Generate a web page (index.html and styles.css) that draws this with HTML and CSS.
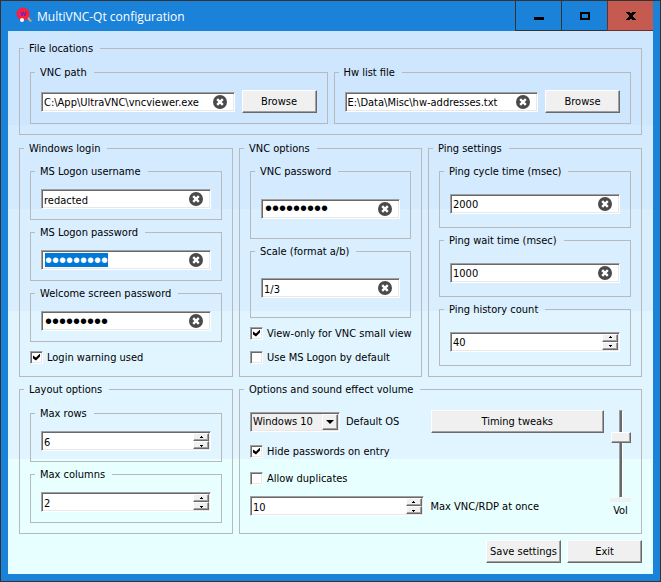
FILE: index.html
```html
<!DOCTYPE html>
<html lang="en">
    <head>
        <title>MultiVNC-Qt configuration</title>
        <meta charset="UTF-8">
        <meta name="viewport" content="width=device-width, initial-scale=1.0">
        <link rel="stylesheet" href="styles.css">
    </head>
    <body>
        <svg class="defs" aria-hidden="true">
            <symbol id="clear" viewBox="0 0 14 14">
                <circle cx="7" cy="7" r="7" fill="#4a4a4a"/>
                <path d="M4.2 4.2l5.6 5.6M9.8 4.2L4.2 9.8" stroke="#fff" stroke-width="2.4"/>
            </symbol>
            <symbol id="up" viewBox="0 0 5 3"><path d="M2 0h1v1h1v1H1V1h1z"/></symbol>
            <symbol id="down" viewBox="0 0 5 3"><path d="M1 1h3v1H3v1H2V2H1z"/></symbol>
        </svg>

        <div class="window">
            <header class="titlebar">
                <svg class="app-icon" viewBox="0 0 16 16">
                    <path d="M10 9l2-1 4 5-2 1z" fill="#c9a27c"/>
                    <circle cx="7" cy="6" r="6.5" fill="#fb1f3b"/>
                    <text x="7" y="8" text-anchor="middle" font-size="6" font-weight="bold" fill="#6a1fd0">W</text>
                    <circle cx="6" cy="12" r="2" fill="#fff"/>
                </svg>
                <h1>MultiVNC-Qt configuration</h1>
                <div class="window-buttons">
                    <button type="button" aria-label="Minimize"><svg viewBox="0 0 12 10"><path d="M1 6h10v3H1z"/></svg></button>
                    <button type="button" aria-label="Maximize"><svg viewBox="0 0 12 10"><path fill-rule="evenodd" d="M1 1h10v8H1zM3 3v4h6V3z"/></svg></button>
                    <button type="button" class="close" aria-label="Close"><svg viewBox="0 0 12 10"><path d="M1 1h4v1h2V1h4v1h-1v1H9v1H8v2h1v1h1v1h1v1H7V8H5v1H1V8h1V7h1V6h1V4H3V3H2V2H1z"/></svg></button>
                </div>
            </header>

            <form class="content">
                <fieldset class="panel files">
                    <legend>File locations</legend>
                    <fieldset class="group">
                        <legend><label for="vncPath">VNC path</label></legend>
                        <div class="field">
                            <input type="text" id="vncPath" value="C:\App\UltraVNC\vncviewer.exe">
                            <button type="button" class="clear" aria-label="Clear"><svg><use href="#clear"/></svg></button>
                        </div>
                        <button type="button" class="button">Browse</button>
                    </fieldset>
                    <fieldset class="group">
                        <legend><label for="hwFile">Hw list file</label></legend>
                        <div class="field">
                            <input type="text" id="hwFile" value="E:\Data\Misc\hw-addresses.txt">
                            <button type="button" class="clear" aria-label="Clear"><svg><use href="#clear"/></svg></button>
                        </div>
                        <button type="button" class="button">Browse</button>
                    </fieldset>
                </fieldset>

                <div class="panels">
                    <fieldset class="panel">
                        <legend>Windows login</legend>
                        <fieldset class="group">
                            <legend><label for="username">MS Logon username</label></legend>
                            <div class="field">
                                <input type="text" id="username" value="redacted">
                                <button type="button" class="clear" aria-label="Clear"><svg><use href="#clear"/></svg></button>
                            </div>
                        </fieldset>
                        <fieldset class="group">
                            <legend><label for="logonPassword">MS Logon password</label></legend>
                            <div class="field">
                                <input type="password" id="logonPassword" value="redacted1">
                                <button type="button" class="clear" aria-label="Clear"><svg><use href="#clear"/></svg></button>
                            </div>
                        </fieldset>
                        <fieldset class="group">
                            <legend><label for="welcomePassword">Welcome screen password</label></legend>
                            <div class="field">
                                <input type="password" id="welcomePassword" value="redacted1">
                                <button type="button" class="clear" aria-label="Clear"><svg><use href="#clear"/></svg></button>
                            </div>
                        </fieldset>
                        <label class="check"><input type="checkbox" checked>Login warning used</label>
                    </fieldset>

                    <fieldset class="panel">
                        <legend>VNC options</legend>
                        <fieldset class="group">
                            <legend><label for="vncPassword">VNC password</label></legend>
                            <div class="field">
                                <input type="password" id="vncPassword" value="redacted1">
                                <button type="button" class="clear" aria-label="Clear"><svg><use href="#clear"/></svg></button>
                            </div>
                        </fieldset>
                        <fieldset class="group">
                            <legend><label for="scale">Scale (format a/b)</label></legend>
                            <div class="field">
                                <input type="text" id="scale" value="1/3">
                                <button type="button" class="clear" aria-label="Clear"><svg><use href="#clear"/></svg></button>
                            </div>
                        </fieldset>
                        <label class="check"><input type="checkbox" checked>View-only for VNC small view</label>
                        <label class="check"><input type="checkbox">Use MS Logon by default</label>
                    </fieldset>

                    <fieldset class="panel">
                        <legend>Ping settings</legend>
                        <fieldset class="group">
                            <legend><label for="pingCycle">Ping cycle time (msec)</label></legend>
                            <div class="field">
                                <input type="text" id="pingCycle" value="2000">
                                <button type="button" class="clear" aria-label="Clear"><svg><use href="#clear"/></svg></button>
                            </div>
                        </fieldset>
                        <fieldset class="group">
                            <legend><label for="pingWait">Ping wait time (msec)</label></legend>
                            <div class="field">
                                <input type="text" id="pingWait" value="1000">
                                <button type="button" class="clear" aria-label="Clear"><svg><use href="#clear"/></svg></button>
                            </div>
                        </fieldset>
                        <fieldset class="group">
                            <legend><label for="pingHistory">Ping history count</label></legend>
                            <div class="field">
                                <input type="number" id="pingHistory" value="40">
                                <div class="spin">
                                    <button type="button" data-step="1" aria-label="Increase"><svg><use href="#up"/></svg></button>
                                    <button type="button" data-step="-1" aria-label="Decrease"><svg><use href="#down"/></svg></button>
                                </div>
                            </div>
                        </fieldset>
                    </fieldset>

                    <fieldset class="panel layout">
                        <legend>Layout options</legend>
                        <fieldset class="group">
                            <legend><label for="maxRows">Max rows</label></legend>
                            <div class="field">
                                <input type="number" id="maxRows" value="6">
                                <div class="spin">
                                    <button type="button" data-step="1" aria-label="Increase"><svg><use href="#up"/></svg></button>
                                    <button type="button" data-step="-1" aria-label="Decrease"><svg><use href="#down"/></svg></button>
                                </div>
                            </div>
                        </fieldset>
                        <fieldset class="group">
                            <legend><label for="maxColumns">Max columns</label></legend>
                            <div class="field">
                                <input type="number" id="maxColumns" value="2">
                                <div class="spin">
                                    <button type="button" data-step="1" aria-label="Increase"><svg><use href="#up"/></svg></button>
                                    <button type="button" data-step="-1" aria-label="Decrease"><svg><use href="#down"/></svg></button>
                                </div>
                            </div>
                        </fieldset>
                    </fieldset>

                    <fieldset class="panel options">
                        <legend>Options and sound effect volume</legend>
                        <div class="option-rows">
                            <div class="option-row">
                                <div class="option-cell">
                                    <div class="dropdown">
                                        <select id="defaultOs">
                                            <option>Windows 10</option>
                                            <option>Windows 7</option>
                                        </select>
                                        <span class="arrow"></span>
                                    </div>
                                    <label for="defaultOs">Default OS</label>
                                </div>
                                <button type="button" class="button">Timing tweaks</button>
                            </div>
                            <label class="check"><input type="checkbox" checked>Hide passwords on entry</label>
                            <label class="check"><input type="checkbox">Allow duplicates</label>
                            <div class="option-row">
                                <div class="field">
                                    <input type="number" id="maxAtOnce" value="10">
                                    <div class="spin">
                                        <button type="button" data-step="1" aria-label="Increase"><svg><use href="#up"/></svg></button>
                                        <button type="button" data-step="-1" aria-label="Decrease"><svg><use href="#down"/></svg></button>
                                    </div>
                                </div>
                                <label for="maxAtOnce">Max VNC/RDP at once</label>
                            </div>
                        </div>
                        <div class="volume">
                            <input type="range" id="volume" min="0" max="100" value="72">
                            <label for="volume">Vol</label>
                        </div>
                    </fieldset>
                </div>

                <div class="actions">
                    <button type="button" class="button">Save settings</button>
                    <button type="button" class="button">Exit</button>
                </div>
            </form>
        </div>

        <script>
            document.querySelectorAll('.clear').forEach(button => {
                button.addEventListener('click', () => {
                    const input = button.parentElement.querySelector('input');
                    input.value = '';
                    input.focus();
                });
            });

            document.querySelectorAll('.spin button').forEach(button => {
                button.addEventListener('click', () => {
                    const input = button.closest('.field').querySelector('input');
                    input.value = Number(input.value) + Number(button.dataset.step);
                });
            });

            const logonPassword = document.getElementById('logonPassword');
            logonPassword.focus();
            logonPassword.select();
        </script>
    </body>
</html>
```
FILE: styles.css
```css
* {
    box-sizing: border-box;
}
body {
    margin: 0;
    font-family: "DejaVu Sans Condensed", Tahoma, sans-serif;
    font-size: 11px;
    line-height: 13px;
    color: #000;
}
input, select, button {
    font: inherit;
    color: inherit;
    margin: 0;
    padding: 0;
    border: none;
    outline: none;
}
.defs {
    display: none;
}
.window {
    min-height: 100vh;
    display: flex;
    flex-direction: column;
    background-color: #1a82d8;
    border: 1px solid #333;
    padding: 0 7px 7px;
}

/* title bar */
.titlebar {
    display: flex;
    align-items: center;
    height: 30px;
    padding-left: 8px;
}
.titlebar h1 {
    flex: 1;
    margin: 0 0 0 5px;
    font-family: "Open Sans", "Segoe UI", sans-serif;
    font-size: 12px;
    font-weight: normal;
    color: #fff;
}
.app-icon {
    width: 16px;
    height: 16px;
    overflow: visible;
}
.window-buttons {
    display: flex;
    align-self: stretch;
}
.window-buttons button {
    display: flex;
    align-items: center;
    justify-content: center;
    width: 46px;
    background-color: #1a82d8;
    border-left: 1px solid #333;
    border-bottom: 1px solid #333;
}
.window-buttons .close {
    background-color: #c45a50;
    border-color: #6b2f2a;
}
.window-buttons svg {
    width: 12px;
    height: 10px;
}

/* content */
.content {
    flex: 1;
    display: flex;
    flex-direction: column;
    padding: 11px;
    background: linear-gradient(#cfe6ff 94px, #d4eaff 94px 178px, #d9eeff 178px 280px, #e0f5ff 280px 428px, #e8ffff 428px);
}
fieldset {
    min-width: 0;
    margin: 0;
    border: 1px solid #b9b9b9;
}
legend {
    margin-left: -6px;
    padding: 0 7px 0 5px;
}
.panel {
    display: flex;
    flex-direction: column;
    gap: 6px;
    padding: 10px;
}
.files {
    flex-direction: row;
    padding-top: 11px;
    margin-bottom: 7px;
}
.panels {
    display: grid;
    grid-template-columns: 214fr 183fr 214fr;
    gap: 6px;
}
.layout {
    padding-top: 11px;
}
.group {
    flex: 1;
    display: flex;
    align-items: center;
    gap: 7px;
    min-height: 55px;
    padding: 11px 10px 9px;
}
.files .group {
    padding-bottom: 10px;
}

/* controls */
.field {
    flex: 1;
    min-width: 0;
    display: flex;
    align-items: center;
    height: 20px;
    background-color: #fff;
    border: 1px solid;
    border-color: #a0a0a0 #fff #fff #a0a0a0;
    box-shadow: inset 1px 1px #696969, inset -1px -1px #e8e8e8;
}
.field input {
    flex: 1;
    min-width: 0;
    width: 100%;
    padding: 2px 0 0 2px;
    background: none;
    appearance: textfield;
}
.field input[type="password"] {
    height: 14px;
    padding: 0 0 0 3px;
    font-family: "Liberation Sans", Arial, sans-serif;
    font-size: 20px;
    line-height: 14px;
}
.field input::selection {
    background-color: #0078d7;
    color: #fff;
}
.field input::-webkit-inner-spin-button {
    display: none;
}
.clear {
    width: 14px;
    height: 14px;
    margin-right: 7px;
    background: none;
}
.clear svg {
    display: block;
    width: 14px;
    height: 14px;
}
.spin {
    display: flex;
    flex-direction: column;
    width: 16px;
    margin-right: 1px;
}
.spin button {
    display: flex;
    align-items: center;
    justify-content: center;
    height: 8px;
}
.spin svg {
    width: 5px;
    height: 3px;
}
.button, .spin button, .arrow {
    background-color: #f0f0f0;
    border: 1px solid;
    border-color: #fff #696969 #696969 #fff;
    box-shadow: inset -1px -1px #a0a0a0;
}
.button {
    width: 75px;
    height: 23px;
    white-space: nowrap;
}
.check {
    display: flex;
    align-items: center;
    gap: 4px;
    height: 18px;
    white-space: nowrap;
}
.check input {
    appearance: none;
    flex: none;
    width: 13px;
    height: 13px;
    background-color: #fff;
    border: 1px solid;
    border-color: #a0a0a0 #fff #fff #a0a0a0;
    box-shadow: inset 1px 1px #696969, inset -1px -1px #e8e8e8;
}
.check input:checked::before {
    content: "";
    display: block;
    width: 7px;
    height: 7px;
    margin: 2px;
    background-color: #000;
    clip-path: polygon(0 2px, 3px 4px, 7px 0, 7px 3px, 3px 7px, 0 5px);
}
.dropdown {
    display: grid;
    width: 90px;
    height: 20px;
    background-color: #f0f0f0;
    border: 1px solid;
    border-color: #a0a0a0 #fff #fff #a0a0a0;
    box-shadow: inset 1px 1px #696969, inset -1px -1px #e8e8e8;
}
.dropdown select {
    grid-area: 1 / 1;
    appearance: none;
    padding-left: 2px;
    background: none;
}
.arrow {
    grid-area: 1 / 1;
    justify-self: end;
    display: flex;
    align-items: center;
    justify-content: center;
    width: 16px;
    margin: 1px;
    pointer-events: none;
}
.arrow::before {
    content: "";
    border: 4px solid transparent;
    border-top-color: #000;
    border-bottom: none;
}

/* sound and other options */
.options {
    grid-column: span 2;
    flex-direction: row;
    padding-top: 14px;
}
.option-rows {
    flex: 1;
    display: flex;
    flex-direction: column;
    justify-content: space-between;
    padding-bottom: 7px;
}
.option-row {
    display: grid;
    grid-template-columns: 1fr 1fr;
    align-items: center;
    gap: 7px;
}
.option-row .button {
    width: 100%;
}
.option-cell {
    display: flex;
    align-items: center;
    gap: 6px;
}
.volume {
    display: flex;
    flex-direction: column;
    align-items: center;
    width: 21px;
}
.volume input {
    appearance: none;
    writing-mode: vertical-lr;
    direction: rtl;
    width: 21px;
    height: 92px;
    background: none;
    border-bottom: 4px solid #f0f0f0;
    margin-bottom: 2px;
}
.volume input::-webkit-slider-runnable-track {
    width: 4px;
    background-color: #696969;
    border: 1px solid;
    border-color: #a0a0a0 #fff #fff #a0a0a0;
}
.volume input::-webkit-slider-thumb {
    appearance: none;
    width: 20px;
    height: 11px;
    margin-left: -9px;
    background-color: #f0f0f0;
    border: 1px solid;
    border-color: #fff #696969 #696969 #fff;
    box-shadow: inset -1px -1px #a0a0a0;
}
.actions {
    display: flex;
    justify-content: flex-end;
    gap: 6px;
    margin-top: 6px;
}
```
